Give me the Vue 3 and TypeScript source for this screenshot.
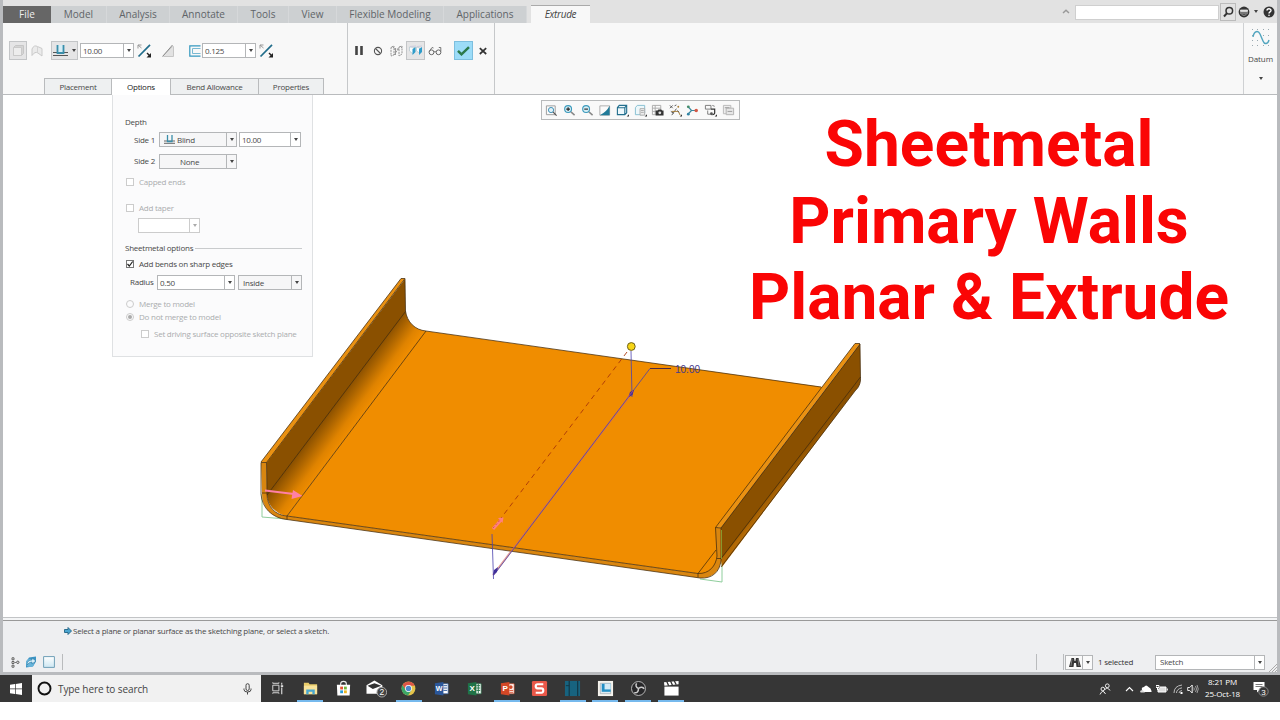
<script setup lang="ts">
interface Tab { label: string; width: number; kind?: string }
const tabs: Tab[] = [
  { label: 'File', width: 48, kind: 'file' },
  { label: 'Model', width: 56 },
  { label: 'Analysis', width: 63 },
  { label: 'Annotate', width: 68 },
  { label: 'Tools', width: 51 },
  { label: 'View', width: 48 },
  { label: 'Flexible Modeling', width: 107 },
  { label: 'Applications', width: 83 },
  { label: 'Extrude', width: 59, kind: 'active' },
]
const subTabs: Tab[] = [
  { label: 'Placement', width: 68 },
  { label: 'Options', width: 59, kind: 'open' },
  { label: 'Bend Allowance', width: 88 },
  { label: 'Properties', width: 65 },
]
const titleLines: string[] = ['Sheetmetal', 'Primary Walls', 'Planar & Extrude']
</script>

<template>
  <div class="screen">
    <div class="window">
      <header class="tabbar">
        <div
          v-for="t in tabs" :key="t.label" class="tab" :class="t.kind"
          :style="{ width: t.width + 'px' }"
        ><span>{{ t.label }}</span></div>
        <div class="finder">
          <svg class="up" width="8" height="5" viewBox="0 0 8 5"><path d="M1 4 4 1.2 7 4" fill="none" stroke="#999" stroke-width="1.5" /></svg>
          <div class="searchbox"></div>
          <div class="searchbtn">
            <svg width="11" height="12" viewBox="0 0 11 12"><circle cx="6.3" cy="4.8" r="3.3" fill="none" stroke="#333" stroke-width="1.5" /><path d="M4 7.2 1 10.5" stroke="#333" stroke-width="2" /></svg>
          </div>
          <svg class="face" width="12" height="12" viewBox="0 0 12 12"><circle cx="6" cy="6" r="5.4" fill="#333" /><path d="M2.500 4h7v1.500h-7zM2 7h8" fill="#e2e2e2" stroke="#e2e2e2" stroke-width=".8" /><path d="M3.500 8.600q2.500 1.500 5 0" fill="none" stroke="#ccc" stroke-width=".7" /></svg>
          <i class="caret small"></i>
          <svg class="help" width="12" height="12" viewBox="0 0 12 12"><circle cx="6" cy="6" r="5.5" fill="#333" /><path d="M4 4.6C4 2.2 8 2.2 8 4.5 8 6 6 5.8 6 7.4" fill="none" stroke="#fff" stroke-width="1.4" /><circle cx="6" cy="9.2" r=".8" fill="#fff" /></svg>
        </div>
      </header>

      <section class="ribbon">
        <div class="pane feature">
          <div class="tools">
            <div class="btn cube">
              <svg width="13" height="13" viewBox="0 0 13 13"><path d="M1.500 3.500 3.500 1.500h8v8l-2 2h-8z" fill="#d4d4d4" stroke="#c6c6c6" /><path d="M1.500 3.500h8v8h-8z" fill="#ededed" stroke="#cacaca" /></svg>
            </div>
            <svg class="surf" width="12" height="13" viewBox="0 0 12 13"><path d="M1 5Q3 .5 6.500 2.500L11 4.500v7.500L7 9Q4 7 1 11.500z" fill="#ebebeb" stroke="#cacaca" /><path d="M6.500 2.500V9" stroke="#d4d4d4" /></svg>
            <div class="btn depth">
              <svg width="15" height="13" viewBox="0 0 15 13"><path d="M0 8.500h15M0 11.500h15" stroke="#555" stroke-width="1.2" /><path d="M4.500 1v8h6V1" fill="#d7eef6" stroke="#3a8eaa" stroke-width="1.800" /></svg>
              <i class="caret"></i>
            </div>
            <div class="field num"><span>10.00</span><b><i class="caret"></i></b></div>
            <svg class="flip" width="15" height="14" viewBox="0 0 15 14"><path d="M1.500 12.500 13 .800" stroke="#216d8b" stroke-width="1.700" /><path d="M1 1h3.500M1 1v3.500M1 1l3.500 3" stroke="#999" /><path d="M10 9l3 3" stroke="#222" stroke-width="1.400" /><path d="M14 9v4.500h-4.500z" fill="#222" /></svg>
            <svg class="cut" width="13" height="12" viewBox="0 0 13 12"><path d="M1.500 11.500v-1l9-9h1v10z" fill="#e2e2e2" stroke="#c6c6c6" /><path d="M.5 11.500 10.500 0" stroke="#888" /></svg>
            <svg class="thick" width="12" height="12" viewBox="0 0 12 12"><path d="M11.500.800H.800v10.400h10.700" fill="none" stroke="#3498bf" stroke-width="1.2" /><path d="M11.500 3.500H3.500v5h8" fill="none" stroke="#79b9d2" /></svg>
            <div class="field num"><span>0.125</span><b><i class="caret"></i></b></div>
            <svg class="flip" width="15" height="14" viewBox="0 0 15 14"><path d="M1.500 12.500 13 .800" stroke="#216d8b" stroke-width="1.700" /><path d="M1 1h3.500M1 1v3.500M1 1l3.500 3" stroke="#999" /><path d="M10 9l3 3" stroke="#222" stroke-width="1.400" /><path d="M14 9v4.500h-4.500z" fill="#222" /></svg>
          </div>
          <div class="subtabs">
            <div
              v-for="s in subTabs" :key="s.label" class="subtab" :class="s.kind"
              :style="{ width: s.width + 'px' }"
            ><span>{{ s.label }}</span></div>
          </div>
        </div>

        <div class="pane confirm">
          <div class="cell"><svg width="8" height="9" viewBox="0 0 8 9"><path d="M1.500 0v9M6.500 0v9" stroke="#444" stroke-width="2.600" /></svg></div>
          <div class="cell"><svg width="10" height="10" viewBox="0 0 10 10"><circle cx="5" cy="5" r="3.600" fill="none" stroke="#555" stroke-width="1.100" /><path d="M2.500 2.500l5 5" stroke="#555" stroke-width="1.100" /></svg></div>
          <div class="cell"><svg width="13" height="12" viewBox="0 0 13 12"><path d="M1 2.500 4 1v9l-3 1zM4 4h5M9 2l3-1v8l-3 2zM4 10l5-7" fill="none" stroke="#888" stroke-width=".9" stroke-dasharray="2 .8" /><path d="M5.500 3v7M2 1l2 2M10 1l2 2" stroke="#999" /></svg></div>
          <div class="btn cell"><svg width="14" height="11" viewBox="0 0 14 11"><path d="M.5 2 5.500 2.500V7L3.500 8.500.500 6zM7.500 2 10.500 3v5l-3-2z" fill="#fbfdfe" stroke="#aac0c8" stroke-width=".6" /><path d="M3.500 4 6.500 2v5L3.500 10zM10 4 13 2v5L10 10z" fill="#2e9cca" /><path d="M1 1.500l6-.5M8 1.500l5-.5" stroke="#ccd" /></svg></div>
          <div class="cell"><svg width="14" height="10" viewBox="0 0 14 10"><circle cx="3.500" cy="6.300" r="2.400" fill="none" stroke="#666" /><circle cx="10.500" cy="6.300" r="2.400" fill="none" stroke="#666" /><path d="M6 6q1-1 2 0M1.200 5.500 4 1.500l1.500.5M12.800 5.500V1.500h-2" fill="none" stroke="#777" /></svg></div>
          <div class="btn ok cell"><svg width="13" height="10" viewBox="0 0 13 10"><path d="M1 4.800 4.500 8.300 12 1.200" fill="none" stroke="#2b7a4c" stroke-width="2.500" /></svg></div>
          <div class="cell"><svg width="8" height="8" viewBox="0 0 8 8"><path d="M.8 1.200 7.200 7M7.200 1.200.8 7" stroke="#333" stroke-width="1.700" /></svg></div>
        </div>

        <div class="pane spare"></div>
        <div class="datum">
          <svg width="18" height="18" viewBox="0 0 18 18"><g fill="#9aa9b0"><path d="M0 0h1v1H0zM5 0h1v1H5zM11 0h1v1h-1zM16 0h1v1h-1zM0 6h1v1H0zM11 6h1v1h-1zM16 6h1v1h-1zM0 11h1v1H0zM5 11h1v1H5zM0 16h1v1H0zM5 16h1v1H5zM11 16h1v1h-1zM16 16h1v1h-1z" /></g><path d="M1 8C2 2 6 1 8 5l3 7c1.500 4 5 3 6-1" fill="none" stroke="#52a5bf" stroke-width="1.400" /></svg>
          <span>Datum</span>
          <i class="caret"></i>
        </div>
      </section>

      <main class="stage">
        <svg class="model" width="1276" height="522" viewBox="2 95 1276 522">
          <defs>
            <linearGradient id="bend" gradientUnits="userSpaceOnUse" x1="336" y1="403" x2="359" y2="420">
              <stop offset="0" stop-color="#8a5000" /><stop offset=".3" stop-color="#ad6500" /><stop offset=".7" stop-color="#df8300" /><stop offset="1" stop-color="#f08d00" />
            </linearGradient>
            <linearGradient id="under" gradientUnits="userSpaceOnUse" x1="785" y1="472" x2="792" y2="478">
              <stop offset="0" stop-color="#8a5000" /><stop offset="1" stop-color="#b46a05" />
            </linearGradient>
          </defs>
          <path d="M262 494v23l24 2M722 560v22l-22-3" fill="none" stroke="#8fce9c" stroke-width="1" />
          <path d="M425.500 331 822.500 387 718 527V562L714 569 706 575 698 573.500 287 516z" fill="#f08d00" />
          <path d="M405.500 311C407 322 415 330 426 331L287 516C276 514 267 505 267 494z" fill="url(#bend)" />
          <path d="M266.500 462.500 405 279 405.500 312 267 495z" fill="#8a5000" />
          <path d="M261 462 401 278.500h4L266.500 463z" fill="#ea9112" />
          <path d="M261 462.500h5.500L267 494C267 507 276 515.500 287 516L698 573.500C709 574 716 566 716.500 556L715.500 527.500 721 528v32C720 572 711 579 700 578L287 519.500C272 518 262 508 262 494z" fill="#d98610" />
          <path d="M855 343.500h5L721 528l-5.500-.5z" fill="#ea9112" />
          <path d="M860 344l.5 36C860 386 857 389 855 391L722 567l-1-6V528z" fill="url(#under)" />
          <path d="M860 344v33L721 559.500V528z" fill="#8a5000" />
          <g fill="none" stroke="#432b0c" stroke-width=".75">
            <path d="M261 462 401 278.500h4L266.500 462.500H261V494C262 508 272 518 287 519.500L700 578C712 579 720 572 721 560V528L860 344l.5 36C860 386 857 389 855 391L721 567" />
            <path d="M266.500 462.500 267 494C267 507 276 515.500 287 516L698 573.500C709 574 716 566 717 556L715.500 527.500 855 343.500h5M715.500 527.500l5.500.5" />
            <path d="M405 279 405.500 311C407 322 415 330 426 331L821 387M405.500 311.500 267 495M426 331 287 516v3.500M716 550 698 573.500v4M717 558.500h4L860.500 377M262 493h5" />
          </g>
          <path d="M721.500 530v29" stroke="#91ad38" stroke-width=".8" />
          <path d="M627 352 492 530" stroke="#a93609" stroke-width=".9" stroke-dasharray="5 4" />
          <path d="M632 393 493 575" stroke="#d76c61" stroke-width="1.800" opacity=".65" />
          <path d="M671 368.500H650L493.500 575.500M631 351 632 397M492 534 493.500 579" fill="none" stroke="#4a41ad" stroke-width=".8" />
          <path d="M671 368.500H650" stroke="#4c2944" />
          <path d="M634 390l-1.500 5-4 2 1.500-5zM493 575l1-5 4-3-1 5z" fill="#40309a" />
          <path d="M628 397l5-6" stroke="#a54a86" />
          <circle cx="631.300" cy="346.500" r="3.900" fill="#f7d515" stroke="#6d611c" />
          <path d="M265 490.500 294 494" stroke="#ff80a5" stroke-width="1.800" /><path d="M293 490 302.500 496 291.500 499z" fill="#ff80a5" />
          <path d="M493 529 501 520" stroke="#ff8080" stroke-width="3" /><path d="M498 518l5.500-.5-1 5.500z" fill="#ff8080" />
          <path d="M493 528l8-9" stroke="#c0392b" stroke-width=".6" stroke-dasharray="2 2" />
          <text x="675" y="373" font-size="11.500" textLength="25" lengthAdjust="spacingAndGlyphs" fill="#473b8a">10.00</text>
        </svg>

        <div class="viewbar">
          <div><svg viewBox="0 0 14 14"><path d="M1.500 2h9.500v9.500H1.500z" fill="none" stroke="#999" /><circle cx="6.500" cy="6.500" r="2.800" fill="#dff1f8" stroke="#3a8eb4" /><path d="M8.500 8.500l4 4" stroke="#555" stroke-width="1.300" /></svg></div>
          <div><svg viewBox="0 0 14 14"><circle cx="5.500" cy="5.500" r="3.700" fill="#d5edf5" stroke="#3b9abc" stroke-width="1.200" /><path d="M3.500 5.500h4M5.500 3.500v4" stroke="#222" stroke-width="1.200" /><path d="M8.500 8.500l4 3.500" stroke="#888" stroke-width="1.600" /></svg></div>
          <div><svg viewBox="0 0 14 14"><circle cx="5.500" cy="5.500" r="3.700" fill="#d5edf5" stroke="#3b9abc" stroke-width="1.200" /><path d="M3.500 5.500h4" stroke="#222" stroke-width="1.200" /><path d="M8.500 8.500l4 3.500" stroke="#888" stroke-width="1.600" /></svg></div>
          <div><svg viewBox="0 0 14 14"><path d="M2 2h10.500v10H2z" fill="#fafafa" stroke="#aaa" /><path d="M12.500 2v10H2Q9 9 12.500 2z" fill="#217b99" /></svg></div>
          <div><svg viewBox="0 0 14 14"><path d="M1.500 4 3.500 1.500h8v8l-2 2h-8zM1.500 4h8v7.500M9.500 4l2-2.500" fill="#eef8fc" stroke="#236f8e" stroke-width="1.200" /><path d="M11.500 13.500h2.500v-2.500z" fill="#333" /></svg></div>
          <div><svg viewBox="0 0 14 14"><path d="M1.500 4 3.500 1.500h8v8l-2 2h-8z" fill="#edf7fa" stroke="#83bdd1" /><path d="M6.500 5h5v7h-5z" fill="#eee" stroke="#aaa" /><path d="M7.500 7h3M7.500 9h3" stroke="#aaa" /><path d="M11.500 13.500h2.500v-2.500z" fill="#333" /></svg></div>
          <div><svg viewBox="0 0 14 14"><path d="M1.500 1.500h9v10h-9zM1.500 4.500h9M1.500 8h9M4.500 1.500v10" fill="#fafafa" stroke="#aaa" /><path d="M5 7h2l1-1h3l1 1h1.500v5.500H5z" fill="#333" /><circle cx="9.500" cy="9.500" r="1.500" fill="#ddd" /></svg></div>
          <div><svg viewBox="0 0 14 14"><path d="M1 1.500l3 3M4 1.500l-3 3M3 12l5-7M6 2l2-1" stroke="#555" /><path d="M3 8h7l2 4" fill="none" stroke="#a87c34" /><circle cx="10" cy="3" r="1" fill="#a87c34" /><path d="M9 7l2 2M2 8l3 2" stroke="#555" /><path d="M11.500 13.500h2.500v-2.500z" fill="#333" /></svg></div>
          <div><svg viewBox="0 0 14 14"><path d="M2 2.500l4 4.500-4 4M6 7h5" fill="none" stroke="#39889e" stroke-width="1.300" /><circle cx="2.500" cy="3" r="1.500" fill="#438c6a" /><circle cx="2.500" cy="11" r="1.500" fill="#3284a5" /><circle cx="11" cy="7" r="1.900" fill="#d45745" /></svg></div>
          <div><svg viewBox="0 0 14 14"><path d="M1.500 1.500h6v4h-6zM9 1.500l2.500 1M4 7v4h3" fill="none" stroke="#777" /><path d="M7.500 5.500h4v4q0 2-2.500 2" fill="none" stroke="#333" stroke-width="1.300" /><circle cx="8" cy="10.500" r="1.500" fill="#555" /><path d="M11.500 13.500h2.500v-2.500z" fill="#333" /></svg></div>
          <div><svg viewBox="0 0 14 14"><path d="M1.500 1.500h8v9h-8z" fill="#ededed" stroke="#b9b9b9" /><path d="M4.500 4.500h8v7h-8z" fill="#e6e6e6" stroke="#b1b1b1" /><path d="M3 4h5M6 8h5" stroke="#999" /></svg></div>
        </div>

        <div class="title"><div v-for="l in titleLines" :key="l"><span>{{ l }}</span></div></div>

        <section class="options">
          <div class="row"><span>Depth</span></div>
          <div class="row">
            <label class="side">Side 1</label>
            <div class="field pick"><svg width="11" height="9" viewBox="0 0 11 9"><path d="M0 6h11M0 8.300h11" stroke="#666" /><path d="M3.500 0v6.500h4.500V0" fill="none" stroke="#3a8eaa" stroke-width="1.300" /></svg><span>Blind</span><b><i class="caret"></i></b></div>
            <div class="field len"><span>10.00</span><b><i class="caret"></i></b></div>
          </div>
          <div class="row side2">
            <label class="side">Side 2</label>
            <div class="field pick none"><span>None</span><b><i class="caret"></i></b></div>
          </div>
          <div class="row off"><i class="check"></i><span>Capped ends</span></div>
          <div></div>
          <div class="row off"><i class="check"></i><span>Add taper</span></div>
          <div class="row off"><div class="field taper"><b><i class="caret"></i></b></div></div>
          <div></div>
          <div class="row section"><span>Sheetmetal options</span><hr></div>
          <div class="row"><i class="check on"><svg width="8" height="8" viewBox="0 0 8 8"><path d="M1.500 4 3.300 6 6.700 1.500" fill="none" stroke="#222" stroke-width="1.200" /></svg></i><span>Add bends on sharp edges</span></div>
          <div class="row">
            <label class="radius">Radius</label>
            <div class="field rad"><span>0.50</span><b><i class="caret"></i></b></div>
            <div class="field ins"><span>Inside</span><b><i class="caret"></i></b></div>
          </div>
          <div></div>
          <div class="row off"><i class="radio"></i><span>Merge to model</span></div>
          <div class="row off"><i class="radio dot"></i><span>Do not merge to model</span></div>
          <div class="row off nested"><i class="check"></i><span>Set driving surface opposite sketch plane</span></div>
        </section>
      </main>

      <footer class="status">
        <div class="message">
          <svg width="8" height="8" viewBox="0 0 8 8"><path d="M.5 2.500H4V.5L7.500 4 4 7.500v-2H.5z" fill="#4aa5d0" stroke="#1f6285" stroke-width=".9" /></svg>
          <span>Select a plane or planar surface as the sketching plane, or select a sketch.</span>
        </div>
        <div class="strip">
          <svg class="tree" width="9" height="11" viewBox="0 0 9 11"><path d="M1 .8h2v2H1zM1 4.500h2v2H1zM1 8.200h2v2H1z" fill="#fff" stroke="#555" stroke-width=".9" /><path d="M3.500 5.500H5" stroke="#777" /><circle cx="6.800" cy="5.300" r="1.200" fill="none" stroke="#555" /></svg>
          <svg class="globe" width="12" height="12" viewBox="0 0 12 12"><path d="M1 6 4 1.500 11 .500v5L8 10.500 1 11.500z" fill="#3c94c4" /><circle cx="5" cy="7" r="4" fill="#67b4da" /><path d="M2 9q0-5 5-5V2l4 3-4 3V6Q4 6 2 9z" fill="#d7edf7" stroke="#287aa6" stroke-width=".6" /></svg>
          <svg class="sheet" width="12" height="12" viewBox="0 0 12 12"><defs><linearGradient id="pg" x1="0" y1="0" x2="0" y2="1"><stop stop-color="#fff" /><stop offset="1" stop-color="#cde7f2" /></linearGradient></defs><path d="M.6.600h10.800v10.800H.600z" fill="url(#pg)" stroke="#6f9fb7" /></svg>
          <i class="bar"></i>
          <div class="selection">
            <i class="bar"></i><i class="bar second"></i>
            <div class="field binoc"><svg width="12" height="11" viewBox="0 0 12 11"><path d="M2.500 1h2.500l.6 3h.8L7 1h2.500L12 10H7.500L7 6H5l-.5 4H0z" fill="#353535" /><path d="M3 2 2 9M9 2l1 7" stroke="#999" stroke-width=".7" /></svg><b><i class="caret"></i></b></div>
            <span class="count">1 selected</span>
            <div class="field filter"><span>Sketch</span><b><i class="caret"></i></b></div>
            <svg class="grip" width="9" height="9" viewBox="0 0 9 9"><path d="M1 9 9 1M4 9 9 4M7 9l2-2" stroke="#aaa" /></svg>
          </div>
        </div>
      </footer>
    </div>

    <nav class="taskbar">
      <div class="start"><svg width="12" height="12" viewBox="0 0 12 12"><path d="M0 1.700 5 1v4.600H0zM5.700.900 12 0v5.600H5.700zM0 6.300h5V11L0 10.300zM5.700 6.300H12V12l-6.300-.9z" fill="#fff" /></svg></div>
      <div class="ask">
        <svg width="15" height="15" viewBox="0 0 15 15"><circle cx="7.500" cy="7.500" r="6" fill="none" stroke="#111" stroke-width="1.900" /></svg>
        <span>Type here to search</span>
        <svg class="mic" width="9" height="12" viewBox="0 0 9 12"><rect x="3" y=".7" width="3.200" height="6.800" rx="1.600" fill="none" stroke="#444" /><path d="M1 5.500v1.200q0 2.300 3.500 2.300T8 6.700V5.500M4.500 9v2.500" fill="none" stroke="#444" /></svg>
      </div>
      <div class="apps">
        <div class="app"><svg viewBox="0 0 18 18"><path d="M4 5.500h6.500v6H4zM4 2.500v1h6.500v-1M4 14.500v-1h6.500v1" fill="none" stroke="#ddd" /><path d="M13.500 3v2M13.500 8v7" stroke="#ddd" stroke-width="1.200" /><path d="M12.500 5.500h2.500v2h-2.500z" fill="#ddd" /></svg></div>
        <div class="app live"><svg viewBox="0 0 18 18"><path d="M2 3h5l1 1.500h8V15H2z" fill="#e9cc69" /><path d="M2 6h14v9H2z" fill="#f8e39b" /><path d="M4.500 15v-5h9v5h-2.500v-2.500H7V15z" fill="#48a7cf" /></svg></div>
        <div class="app"><svg viewBox="0 0 18 18"><path d="M6 6V4q0-2.500 3-2.500T12 4v2" fill="none" stroke="#eee" stroke-width="1.200" /><path d="M2 5h14l-.5 11.500h-13z" fill="#fff" /><path d="M5.500 7h3v3h-3z" fill="#e55332" /><path d="M9.500 7h3v3h-3z" fill="#72b63b" /><path d="M5.500 11h3v3h-3z" fill="#289bd6" /><path d="M9.500 11h3v3h-3z" fill="#ecb721" /></svg></div>
        <div class="app"><svg viewBox="0 0 20 18" class="wide"><path d="M1 6 8.500 1.500 16 6v8H1z" fill="#fff" /><path d="M2 6.500 8.500 4 15 6.500 7 9.500z" fill="#333" /><circle cx="15.500" cy="12.500" r="4.600" fill="#444" stroke="#aaa" stroke-width=".9" /><text x="15.500" y="15.300" text-anchor="middle" font-size="8" fill="#fff">2</text></svg></div>
        <div class="app live"><svg viewBox="0 0 18 18"><circle cx="9" cy="9" r="7.300" fill="#e4c34a" /><path d="M2.700 5.300A7.300 7.300 0 0 1 15.600 6H9L6 10.500z" fill="#dc5547" /><path d="M2.700 5.300A7.300 7.300 0 0 0 8.500 16.300L12 11 6 10.500z" fill="#3ca667" /><circle cx="9" cy="9" r="3.600" fill="#fff" /><circle cx="9" cy="9" r="2.800" fill="#4d87cc" /></svg></div>
        <div class="app"><svg viewBox="0 0 18 18"><path d="M9 4h7v10.500H9z" fill="#fff" stroke="#3e6cae" stroke-width=".7" /><path d="M11 6h4M11 8.500h4M11 11h4" stroke="#2b579a" /><path d="M2 3.500 11 2v14.500L2 15z" fill="#2b579a" /><text x="6.500" y="12" text-anchor="middle" font-size="7.500" font-weight="700" fill="#fff">W</text></svg></div>
        <div class="app"><svg viewBox="0 0 18 18"><path d="M9 4h7v10.500H9z" fill="#fff" stroke="#37875b" stroke-width=".7" /><path d="M11 6h4M11 8.500h4M11 11h4M13 4v10" stroke="#207347" /><path d="M2 3.500 11 2v14.500L2 15z" fill="#207347" /><text x="6.500" y="12" text-anchor="middle" font-size="8.500" font-weight="700" fill="#fff">X</text></svg></div>
        <div class="app live"><svg viewBox="0 0 18 18"><path d="M9 4h7v10.500H9z" fill="#fff" stroke="#d35230" stroke-width=".7" /><circle cx="12.500" cy="7.500" r="2" fill="#d24726" /><path d="M11 11h4M11 13h4" stroke="#d24726" /><path d="M2 3.500 11 2v14.500L2 15z" fill="#d24726" /><text x="6.500" y="12" text-anchor="middle" font-size="8.500" font-weight="700" fill="#fff">P</text></svg></div>
        <div class="app"><svg viewBox="0 0 18 18"><rect x="1" y="1" width="16" height="16" rx="1.500" fill="#e95849" /><path d="M13 4.500H7Q5 4.500 5 6.500T7 8.800h4q2 0 2 2.200t-2 2.500H5" fill="none" stroke="#fff" stroke-width="2.300" /></svg></div>
        <div class="app live"><svg viewBox="0 0 18 18"><path d="M1 1h16v16H1z" fill="#17637f" /><path d="M5.500 1v16M14.500 1v16" stroke="#123544" stroke-width="1.200" /><path d="M2 6h3.500" stroke="#123544" /></svg></div>
        <div class="app live"><svg viewBox="0 0 18 18"><path d="M1 1h16v16H1z" fill="#f5f3ed" /><path d="M3.500 3.500h11v11h-11z" fill="#dfeaf0" stroke="#8d9aa0" stroke-width=".6" /><path d="M5 4h9.500v8.500H5z" fill="#238fc4" /><path d="M8 4h6.500v6H8z" fill="#d4ebf5" /></svg></div>
        <div class="app live"><svg viewBox="0 0 18 18"><circle cx="9" cy="9" r="7.400" fill="#272729" stroke="#bbb" stroke-width="1" /><path d="M9 9Q5 7 7 3.500M9 9q4-3 6 .5M9 9q0 5-4.500 4.500" fill="none" stroke="#ccc" stroke-width="1.600" /></svg></div>
        <div class="app live"><svg viewBox="0 0 18 18"><path d="M1.500 7h15v9.500h-15z" fill="#fff" /><path d="M1 2.500 16.500 1v3.500L1.500 6z" fill="#fff" /><path d="M4 1.500l2 4.500M8 1l2 4.500M12 1l2 4" stroke="#333" stroke-width="1.400" /></svg></div>
      </div>
      <div class="tray">
        <svg class="people" width="12" height="12" viewBox="0 0 12 12"><circle cx="8.300" cy="2.800" r="1.900" fill="none" stroke="#fff" stroke-width=".9" /><circle cx="3.800" cy="6" r="1.800" fill="none" stroke="#fff" stroke-width=".9" /><path d="M6 6.500Q8.500 3.500 11 7.500M1 11.500q2.800-6 5.500-.5" fill="none" stroke="#fff" stroke-width=".9" /></svg>
        <svg class="chev" width="9" height="6" viewBox="0 0 9 6"><path d="M1 5 4.500 1.500 8 5" fill="none" stroke="#fff" stroke-width="1.100" /></svg>
        <svg class="cloud" width="12" height="8" viewBox="0 0 12 8"><path d="M2 5Q1 2 4 2q2-3 4.500 0Q11 3 11.500 6v1H3z" fill="#fff" /><path d="M0 7q0-2 2.500-2L5 7.500H1z" fill="#ddd" /></svg>
        <svg class="batt" width="12" height="8" viewBox="0 0 12 8"><path d="M4 2h6v5H2V4" fill="#ddd" stroke="#fff" /><path d="M11.300 3.500v2M0 .5h3v2H0zM1.500 2.500V5" stroke="#fff" fill="none" /></svg>
        <svg class="wifi" width="10" height="10" viewBox="0 0 10 10"><path d="M1 9Q1 2 9 1M3.500 9Q3.500 5 9 3.800M6 9q0-2 3-2.500" fill="none" stroke="#bbb" stroke-width="1" /><path d="M7.500 8h2v2h-2z" fill="#fff" /></svg>
        <svg class="sound" width="12" height="10" viewBox="0 0 12 10"><path d="M.7 3.500h2l2.500-2.500v8L2.700 6.500h-2z" fill="none" stroke="#fff" stroke-width=".9" /><path d="M6.800 3.500q1 1.500 0 3M8.500 2q2 3 0 6M10 1q2.500 4 0 8" fill="none" stroke="#bbb" stroke-width=".8" /></svg>
        <div class="clock"><span>8:21 PM</span><span>25-Oct-18</span></div>
        <svg class="note" width="17" height="17" viewBox="0 0 17 17"><path d="M.5 2h11v8H6.500L4 12.500V10H.5z" fill="#fff" /><path d="M2.500 4.500h7M2.500 6.500h7" stroke="#555" stroke-width=".8" /><circle cx="10.500" cy="11.500" r="4.700" fill="#383838" stroke="#999" stroke-width=".8" /><text x="10.500" y="14.500" text-anchor="middle" font-size="8" fill="#fff">3</text></svg>
      </div>
    </nav>
  </div>
</template>

<style>
body { background: #fff; overflow: hidden; }
</style>

<style scoped>
* { box-sizing: border-box; }
.screen { width: 1280px; height: 702px; font-family: "Open Sans", "Noto Sans", sans-serif; font-size: 8px; letter-spacing: -.24px; color: #484848; white-space: nowrap; display: flex; flex-direction: column; }
.window { height: 675px; border-left: 3px solid #b9bbbe; border-right: 3px solid #b9bbbe; border-bottom: 3px solid #b9bbbe; display: flex; flex-direction: column; }
svg { display: block; flex: none; }
.caret { width: 0; height: 0; border: 2.500px solid transparent; border-top: 3px solid #444; border-bottom: 0; }
.tabbar { height: 23px; flex: none; background: #e2e2e2; padding-top: 6px; display: flex; }
.tab { height: 17px; background: #cdd0d2; border-right: 1px solid #d6d8da; display: flex; align-items: center; justify-content: center; padding-bottom: 2px; font-size: 10px; letter-spacing: 0; color: #606468; flex: none; }
.tab.file { background: #666; color: #eee; border: 0; }
.tab.active { background: #f8f8f8; margin: -1px 0 0 4px; height: 18px; border: 0; border-top: 1px solid #aaa; font-style: italic; color: #444; letter-spacing: -.3px; }
.finder { margin: -6px 2px 0 auto; height: 23px; display: flex; align-items: center; }
.up { margin-right: 5px; }
.searchbox { width: 144px; height: 15px; margin-top: 1px; background: #fff; border: 1px solid #cfcfcf; }
.searchbtn { width: 16px; height: 18px; margin: 0 2px 0 1px; border: 1px solid #bbb; display: flex; align-items: center; justify-content: center; }
.small { margin: 0 5px 0 4px; }
.ribbon { height: 72px; flex: none; background: #f8f8f8; border-bottom: 1px solid #b9bbbd; display: flex; }
.pane { border-right: 1px solid #c6c8ca; }
.feature { width: 345px; display: flex; flex-direction: column; }
.tools { height: 55px; display: flex; align-items: center; padding-left: 6px; }
.btn { border: 1px solid #c3c5c7; background: #e5e5e6; height: 19px; width: 18px; display: flex; align-items: center; justify-content: center; }
.surf { margin: 0 8px 0 4px; }
.depth { width: 27px; gap: 4px; }
.field { height: 15px; border: 1px solid #b4b6b8; background: #fff; display: flex; align-items: center; flex: none; }
.field span { flex: 1; padding-left: 2px; }
.field b { width: 10px; height: 100%; border-left: 1px solid #b4b6b8; display: flex; align-items: center; justify-content: center; flex: none; }
.num { width: 54px; margin-left: 2px; }
.num span { padding-bottom: 1px; }
.flip { margin-left: 3px; }
.cut { margin: 0 14px 0 10px; }
.thick + .num { margin-left: 1px; }
.subtabs { display: flex; padding-left: 41px; height: 16px; }
.subtab { height: 16px; background: #eef0f1; border: 1px solid #b9bbbd; border-bottom: 0; border-left-width: 0; padding-bottom: 1px; display: flex; align-items: center; justify-content: center; }
.subtab:first-child { border-left-width: 1px; }
.subtab.open { background: #fff; color: #222; height: 17px; padding-bottom: 2px; }
.confirm { width: 147px; height: 71px; display: flex; padding: 18px 0 0 1px; }
.confirm .cell { width: 19px; height: 19px; display: flex; align-items: center; justify-content: center; flex: none; }
.confirm .ok { background: #9cdcf8; border-color: #7dbfdf; margin-left: 10px; }
.spare { flex: 1; border-right: 1px solid #cfd1d3; }
.datum { width: 33px; padding: 6px 0 0 0; display: flex; flex-direction: column; align-items: center; }
.datum span { margin: 6px 0 12px; line-height: 12px; letter-spacing: -.05px; }
.stage { position: relative; height: 522px; flex: none; background: #fff; }
.model { margin-left: -1px; font-family: "Liberation Sans", sans-serif; letter-spacing: 0; }
.viewbar { position: absolute; left: 538px; top: 5px; width: 199px; height: 20px; border: 1px solid #b8babb; background: #f9f9f9; display: flex; align-items: center; padding-left: 1px; }
.viewbar div { width: 17.650px; display: flex; justify-content: center; }
.viewbar svg { width: 13px; height: 13px; }
.title { position: absolute; left: 686px; width: 600px; top: 12px; text-align: center; color: #fa0505; font: 700 64px/76.500px Roboto, sans-serif; letter-spacing: 0; }
.options { position: absolute; left: 109px; top: 0; width: 201px; height: 262px; background: #fbfbfc; border: 1px solid #dfe1e3; border-top: 0; padding: 19px 0 0 12px; display: grid; grid-template-rows: 16px 19px 23px 20px 6px 20px 15px 7px 16px 15px 22px 4px 14px 12px 21px; }
.row { display: flex; align-items: center; }
.row > span, .row > label { padding-bottom: 1px; }
.side { width: 34px; padding-left: 9px; }
.side2 { padding-top: 1px; }
.pick { width: 78px; background: #f6f6f7; }
.pick svg { margin-left: 4px; }
.none span { padding-left: 20px; }
.len { width: 62px; margin-left: 2px; }
.off { color: #aaacae; }
.off .field { border-color: #ccc; }
.off .field b { border-color: #ccc; }
.off .caret { border-top-color: #aaa; }
.check { width: 8px; height: 8px; border: 1px solid #ccc; background: #fff; margin: 0 5px 0 1px; display: flex; align-items: center; justify-content: center; flex: none; }
.check.on { border-color: #777; }
.taper { width: 62px; margin-left: 13px; justify-content: flex-end; }
.section hr { border: 0; border-top: 1px solid #c9cbcd; width: 107px; margin: 0 0 0 2px; }
.radius { width: 32px; padding-left: 5px; }
.rad { width: 78px; }
.ins { width: 64px; margin-left: 3px; background: #f6f6f7; }
.ins span { padding-left: 4px; }
.radio { width: 8px; height: 8px; border: 1px solid #ccc; border-radius: 50%; margin: 0 5px 0 1px; display: flex; align-items: center; justify-content: center; flex: none; }
.radio.dot::after { content: ""; width: 4px; height: 4px; border-radius: 50%; background: #aaa; }
.nested { padding-left: 15px; }
.status { height: 55px; flex: none; border-top: 1px solid #c2c4c6; background: #eeeff1; display: flex; flex-direction: column; box-shadow: inset 0 2px #f4f5f6, inset 0 3px #999; }
.message { height: 26px; display: flex; align-items: center; padding-left: 61px; gap: 1px; letter-spacing: -.265px; }
.message { letter-spacing: -.22px; }
.strip { height: 20px; margin-top: 9px; display: flex; align-items: center; padding-left: 8px; }
.globe { margin: 0 6px 0 5px; }
.bar { width: 1px; height: 16px; background: #b9bbbd; margin-left: 7px; }
.selection { display: flex; align-items: center; margin-left: auto; }
.bar.second { margin: 0 1px 0 26px; }
.binoc { width: 28px; height: 15px; background: #fafafa; padding-left: 3px; justify-content: space-between; }
.count { margin-left: 5px; width: 57px; color: #333; padding-bottom: 2px; }
.filter { width: 110px; }
.filter span { padding: 0 0 1px 4px; }
.grip { margin: 10px 0 0 3px; }
.taskbar { height: 27px; background: #363636; display: flex; flex: none; }
.start { width: 32px; display: flex; align-items: center; justify-content: center; }
.ask { width: 229px; background: #f1f1f1; display: flex; align-items: center; padding: 0 9px 0 5px; font-size: 10px; color: #444; }
.ask span { margin-left: 6px; letter-spacing: -.1px; }
.mic { margin-left: auto; }
.apps { display: flex; }
.app { width: 26px; margin-right: 6.800px; height: 27px; display: flex; align-items: center; justify-content: center; border-bottom: 2px solid transparent; padding-top: 1px; }
.app:first-child { margin-left: 3.500px; }
.app svg { width: 17px; height: 17px; font-family: "Liberation Sans", sans-serif; letter-spacing: 0; }
.app svg.wide { width: 22px; height: 19px; }
.app.live { border-bottom-color: #76b9ed; }
.tray { margin-left: auto; padding-right: 10.500px; display: flex; align-items: center; color: #fff; }
.chev { margin: 0 3.500px 0 14px; }
.cloud { margin: 0 2px; }
.batt { margin: 0 1px 0 2px; }
.wifi { margin: 0 4px; }
.clock { width: 42px; margin: 0 9px 0 3px; padding-bottom: 1px; display: flex; flex-direction: column; align-items: center; line-height: 12px; letter-spacing: -.15px; }
.note { font-family: "Liberation Sans", sans-serif; letter-spacing: 0; }
</style>
